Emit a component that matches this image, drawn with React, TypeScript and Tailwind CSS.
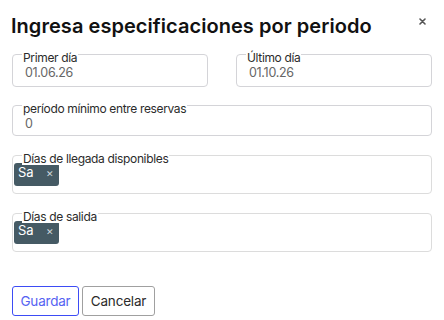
import React from 'react';

const font = { fontFamily: 'Inter, "Noto Sans", sans-serif' };

function Field({ label, value, className = '' }: { label: string; value?: string; className?: string }) {
  return (
    <div className={`relative border border-[#d4d4d8] rounded-[4px] ${className}`}>
      <span className="absolute -top-[3px] left-[9px] bg-white px-px text-[12px] leading-none text-[#2b2b2b] tracking-[-0.35px]">
        {label}
      </span>
      <div className="pt-[12px] px-[12px] text-[12.5px] leading-none text-[#666] tracking-[-0.3px]">{value}</div>
    </div>
  );
}

function ChipField({ label, chips }: { label: string; chips: string[] }) {
  return (
    <div className="relative border border-[#dcdcdc] rounded-[4px] h-[39px] pl-px pt-[7px]">
      <span className="absolute -top-[3px] left-[9px] bg-white px-px text-[12px] leading-none text-[#2b2b2b] tracking-[-0.35px]">
        {label}
      </span>
      <div className="flex gap-1">
        {chips.map(c => (
          <div key={c} className="w-[45px] h-[23px] bg-[#455a64] rounded-[3px] flex items-start pl-[4px] pt-[3px]">
            <span className="text-[13px] leading-none text-white">{c}</span>
            <span className="ml-[12px] mt-[3px] text-[9px] leading-none text-[#cfd8dc]">✕</span>
          </div>
        ))}
      </div>
    </div>
  );
}

export default function App() {
  return (
    <div className="w-[444px] h-[320px] bg-white px-[12px] overflow-hidden" style={font}>
      {/* Header */}
      <div className="flex items-start justify-between pt-[14px]">
        <h2 className="-ml-px text-[20px] leading-[24px] font-semibold text-[#111] tracking-[0.05px]">
          Ingresa especificaciones por periodo
        </h2>
        <svg className="mt-[4px] mr-[6px]" width="7" height="7" viewBox="0 0 7 7">
          <path d="M1 1L6 6M6 1L1 6" stroke="#555" strokeWidth="1.6" strokeLinecap="round" />
        </svg>
      </div>

      {/* Dates */}
      <div className="grid grid-cols-2 gap-[28px] mt-[16px]">
        <Field className="h-[33px]" label="Primer día" value="01.06.26" />
        <Field className="h-[33px]" label="Último día" value="01.10.26" />
      </div>

      <Field className="mt-[18px] h-[31px]" label="período mínimo entre reservas" value="0" />

      <div className="mt-[19px]">
        <ChipField label="Días de llegada disponibles" chips={['Sa']} />
      </div>
      <div className="mt-[19px]">
        <ChipField label="Días de salida" chips={['Sa']} />
      </div>

      {/* Actions */}
      <div className="flex gap-[3px] mt-[34px]">
        <button className="w-[67px] h-[30px] border border-[#3d4cf5] rounded-[3px] text-[13.5px] text-[#5563f2] tracking-[-0.2px]">
          Guardar
        </button>
        <button className="w-[73px] h-[30px] border border-[#a0a0a0] rounded-[3px] text-[13.5px] text-[#2b2b2b] tracking-[-0.2px]">
          Cancelar
        </button>
      </div>
    </div>
  );
}
